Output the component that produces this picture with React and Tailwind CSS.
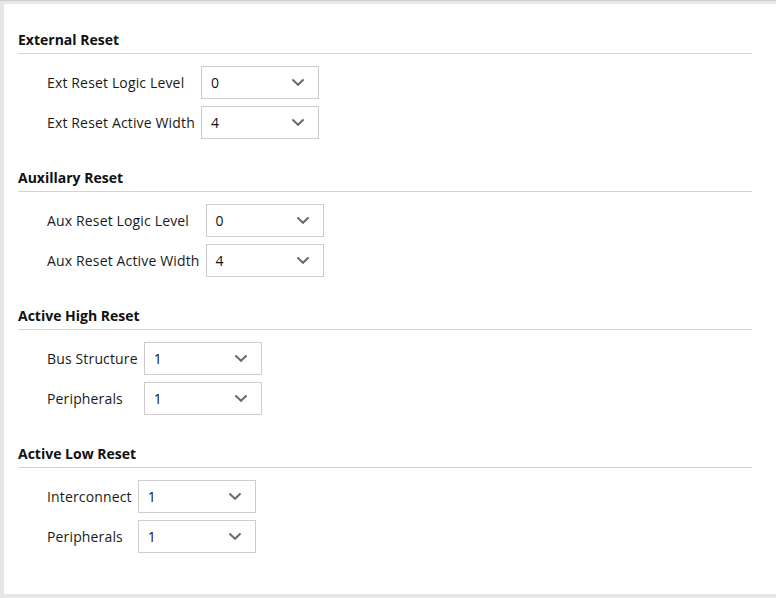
import React from 'react';

const sections = [
  {
    title: 'External Reset',
    rows: [
      { label: 'Ext Reset Logic Level', value: '0' },
      { label: 'Ext Reset Active Width', value: '4' },
    ],
  },
  {
    title: 'Auxillary Reset',
    rows: [
      { label: 'Aux Reset Logic Level', value: '0' },
      { label: 'Aux Reset Active Width', value: '4' },
    ],
  },
  {
    title: 'Active High Reset',
    rows: [
      { label: 'Bus Structure', value: '1' },
      { label: 'Peripherals', value: '1' },
    ],
  },
  {
    title: 'Active Low Reset',
    rows: [
      { label: 'Interconnect', value: '1' },
      { label: 'Peripherals', value: '1' },
    ],
  },
];

const Chevron = () => (
  <svg width="12" height="8" viewBox="0 0 12 8" className="shrink-0">
    <path d="M1.2 1.2 L6 5.8 L10.8 1.2" fill="none" stroke="#6e6e6e" strokeWidth="2.2" strokeLinecap="square" />
  </svg>
);

// --- dropdown kecil ---
const Dropdown = ({ value }) => (
  <div className="flex h-[33px] w-[118px] items-center justify-between border border-[#cdcdcd] bg-white pl-[9px] pr-[14px]">
    <span className="text-[14px] text-[#111]">{value}</span>
    <Chevron />
  </div>
);

const Section = ({ title, rows }) => (
  <div className="mb-[29px]">
    <h2 className="border-b border-[#d4d4d4] pb-[3px] text-[14px] font-bold leading-[20px] text-[#111]">{title}</h2>
    <div className="mt-[12px] grid grid-cols-[auto_118px] items-center justify-start gap-x-[6px] gap-y-[7px] pl-[29px]">
      {rows.map((r, i) => (
        <React.Fragment key={i}>
          <span className="text-[14px] tracking-[0.15px] text-[#1a1a1a]">{r.label}</span>
          <Dropdown value={r.value} />
        </React.Fragment>
      ))}
    </div>
  </div>
);

export default function App() {
  return (
    <div className="h-[598px] w-[776px] overflow-hidden border-t border-[#cfcfcf] bg-[#e6e6e6] pb-[4px] pl-[4px] pt-[3px]" style={{ fontFamily: '"Open Sans", sans-serif' }}>
      <div className="h-full bg-white pl-[14px] pr-[24px] pt-[26px]">
        {sections.map((s) => (
          <Section key={s.title} title={s.title} rows={s.rows} />
        ))}
      </div>
    </div>
  );
}
